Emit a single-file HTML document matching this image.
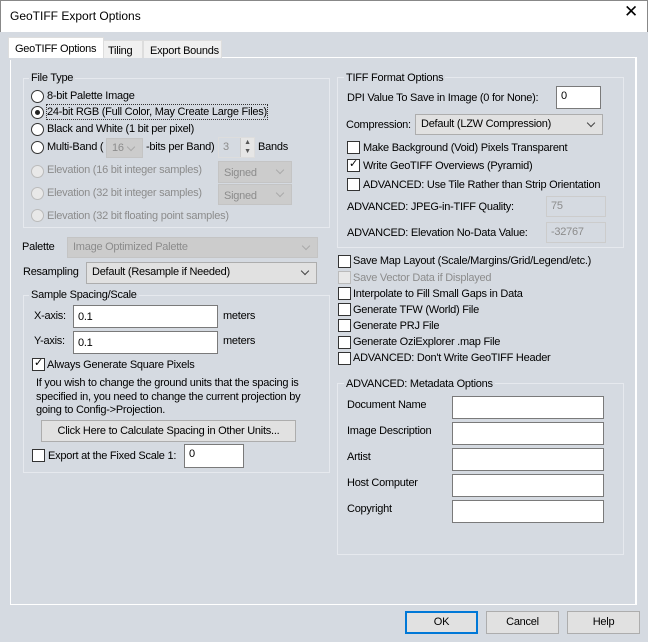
<!DOCTYPE html><html><head><style>
*{box-sizing:border-box;margin:0;padding:0}
body{width:648px;height:642px;background:#d5dae1;font:11px "Liberation Sans",sans-serif;letter-spacing:-0.25px;color:#000;position:relative;overflow:hidden}
.a{position:absolute;white-space:nowrap}
.title{left:0;top:0;width:648px;height:32px;background:#fff;border:1px solid #888;border-bottom:none}
.g{position:absolute;border:1px solid #e6e9ee}
.gl{position:absolute;background:#d5dae1;padding:0 2px;line-height:14px;white-space:nowrap}
.in{position:absolute;background:#fff;border:1px solid #7a7a7a;padding:2px 4px;line-height:14px;white-space:nowrap}
.dis{background:#d5dae1;border-color:#ccc;color:#8c8c8c}
.cb{position:absolute;width:13px;height:13px;background:#fff;border:1px solid #333}
.rb{position:absolute;width:13px;height:13px;background:#fff;border:1px solid #333;border-radius:50%}
.rb.d,.cb.d{border-color:#bbb;background:#e8e8e8}
.t{position:absolute;line-height:14px;white-space:nowrap}
.gr{color:#8c8c8c}
.combo{position:absolute;background:#e1e1e1;border:1px solid #adadad;padding:2px 5px;line-height:14px;white-space:nowrap}
.combo.d{background:#ccc;border-color:#c4c4c4;color:#8c8c8c}
.combo:after{content:"";position:absolute;right:8px;top:5px;width:5px;height:5px;border-right:1px solid #444;border-bottom:1px solid #444;transform:rotate(45deg)}
.combo.d:after{border-color:#aaa}
.btn{position:absolute;background:#e1e1e1;border:1px solid #adadad;text-align:center;line-height:20px;white-space:nowrap}
</style></head><body>
<div class="a title"></div>
<div class="t" style="left:10px;top:9px;font-size:12px;letter-spacing:0">GeoTIFF Export Options</div>
<div class="t" style="left:624px;top:5px;font-size:17px">✕</div>
<div class="a" style="left:10px;top:57px;width:627px;height:548px;border:1px solid #fff;border-right:2px solid #fff"></div>
<div class="a" style="left:103px;top:40px;width:40px;height:18px;border:1px solid #ddd;border-bottom:none;background:#f0f0f0"></div>
<div class="a" style="left:143px;top:40px;width:79px;height:18px;border:1px solid #ddd;border-bottom:none;background:#f0f0f0"></div>
<div class="a" style="left:8px;top:37px;width:96px;height:21px;background:#fff;border:1px solid #ddd;border-bottom:none"></div>
<div class="a" style="left:10px;top:58px;width:94px;height:2px;background:#d5dae1"></div>
<div class="t" style="left:15px;top:42px">GeoTIFF Options</div>
<div class="t" style="left:108px;top:44px">Tiling</div>
<div class="t" style="left:150px;top:44px">Export Bounds</div>
<!-- file type -->
<div class="g" style="left:23px;top:78px;width:307px;height:150px"></div>
<div class="gl" style="left:29px;top:71px">File Type</div>
<div class="rb" style="left:31px;top:90px"></div><div class="t" style="left:47px;top:89px">8-bit Palette Image</div>
<div class="rb" style="left:31px;top:106px"></div><div class="a" style="left:35px;top:110px;width:5px;height:5px;border-radius:50%;background:#222"></div>
<div class="t" style="left:47px;top:105px;outline:1px dotted #333">24-bit RGB (Full Color, May Create Large Files)</div>
<div class="rb" style="left:31px;top:123px"></div><div class="t" style="left:47px;top:122px">Black and White (1 bit per pixel)</div>
<div class="rb" style="left:31px;top:141px"></div><div class="t" style="left:47px;top:140px">Multi-Band (</div>
<div class="combo d" style="left:106px;top:138px;width:37px;height:20px">16</div>
<div class="t" style="left:146px;top:140px">-bits per Band)</div>
<div class="in dis" style="left:218px;top:137px;width:37px;height:21px;border-color:#ddd">3</div>
<div class="a" style="left:240px;top:138px;width:14px;height:19px;background:#e6e6e6;border-left:1px solid #ccc;font-size:7px;text-align:center;line-height:9px;color:#555">▲<br>▼</div>
<div class="t" style="left:258px;top:140px">Bands</div>
<div class="rb d" style="left:31px;top:165px"></div><div class="t gr" style="left:47px;top:163px">Elevation (16 bit integer samples)</div>
<div class="combo d" style="left:218px;top:161px;width:74px;height:22px;padding-top:4px">Signed</div>
<div class="rb d" style="left:31px;top:187px"></div><div class="t gr" style="left:47px;top:186px">Elevation (32 bit integer samples)</div>
<div class="combo d" style="left:218px;top:184px;width:74px;height:21px;padding-top:4px">Signed</div>
<div class="rb d" style="left:31px;top:209px"></div><div class="t gr" style="left:47px;top:209px">Elevation (32 bit floating point samples)</div>
<!-- palette -->
<div class="t" style="left:22px;top:240px">Palette</div>
<div class="combo d" style="left:67px;top:237px;width:251px;height:21px">Image Optimized Palette</div>
<div class="t" style="left:23px;top:265px">Resampling</div>
<div class="combo" style="left:86px;top:262px;width:231px;height:22px">Default (Resample if Needed)</div>
<!-- sample spacing -->
<div class="g" style="left:23px;top:295px;width:307px;height:178px"></div>
<div class="gl" style="left:29px;top:288px">Sample Spacing/Scale</div>
<div class="t" style="left:34px;top:309px">X-axis:</div>
<div class="in" style="left:73px;top:305px;width:145px;height:23px;padding-top:4px">0.1</div>
<div class="t" style="left:223px;top:309px">meters</div>
<div class="t" style="left:34px;top:334px">Y-axis:</div>
<div class="in" style="left:73px;top:331px;width:145px;height:23px;padding-top:4px">0.1</div>
<div class="t" style="left:223px;top:334px">meters</div>
<div class="cb" style="left:32px;top:358px"></div><div class="t" style="left:34px;top:356px;font-size:11px">✓</div>
<div class="t" style="left:47px;top:358px">Always Generate Square Pixels</div>
<div class="t" style="left:36px;top:377px;line-height:13.5px">If you wish to change the ground units that the spacing is<br>specified in, you need to change the current projection by<br>going to Config-&gt;Projection.</div>
<div class="btn" style="left:41px;top:420px;width:255px;height:22px">Click Here to Calculate Spacing in Other Units...</div>
<div class="cb" style="left:32px;top:449px"></div>
<div class="t" style="left:48px;top:449px">Export at the Fixed Scale 1:</div>
<div class="in" style="left:184px;top:444px;width:60px;height:24px">0</div>
<!-- TIFF format -->
<div class="g" style="left:337px;top:77px;width:287px;height:171px"></div>
<div class="gl" style="left:344px;top:71px">TIFF Format Options</div>
<div class="t" style="left:347px;top:91px">DPI Value To Save in Image (0 for None):</div>
<div class="in" style="left:556px;top:86px;width:45px;height:23px">0</div>
<div class="t" style="left:346px;top:118px">Compression:</div>
<div class="combo" style="left:415px;top:114px;width:188px;height:21px">Default (LZW Compression)</div>
<div class="cb" style="left:347px;top:141px"></div><div class="t" style="left:363px;top:141px">Make Background (Void) Pixels Transparent</div>
<div class="cb" style="left:347px;top:159px"></div><div class="t" style="left:349px;top:157px;font-size:11px">✓</div><div class="t" style="left:363px;top:159px">Write GeoTIFF Overviews (Pyramid)</div>
<div class="cb" style="left:347px;top:178px"></div><div class="t" style="left:363px;top:178px">ADVANCED: Use Tile Rather than Strip Orientation</div>
<div class="t" style="left:347px;top:200px">ADVANCED: JPEG-in-TIFF Quality:</div>
<div class="in dis" style="left:546px;top:196px;width:60px;height:21px">75</div>
<div class="t" style="left:347px;top:226px">ADVANCED: Elevation No-Data Value:</div>
<div class="in dis" style="left:546px;top:222px;width:60px;height:21px">-32767</div>
<!-- checkbox list -->
<div class="cb" style="left:338px;top:255px"></div><div class="t" style="left:353px;top:254px">Save Map Layout (Scale/Margins/Grid/Legend/etc.)</div>
<div class="cb d" style="left:338px;top:271px"></div><div class="t gr" style="left:353px;top:271px">Save Vector Data if Displayed</div>
<div class="cb" style="left:338px;top:287px"></div><div class="t" style="left:353px;top:287px">Interpolate to Fill Small Gaps in Data</div>
<div class="cb" style="left:338px;top:303px"></div><div class="t" style="left:353px;top:303px">Generate TFW (World) File</div>
<div class="cb" style="left:338px;top:319px"></div><div class="t" style="left:353px;top:319px">Generate PRJ File</div>
<div class="cb" style="left:338px;top:336px"></div><div class="t" style="left:353px;top:335px">Generate OziExplorer .map File</div>
<div class="cb" style="left:338px;top:352px"></div><div class="t" style="left:353px;top:351px">ADVANCED: Don't Write GeoTIFF Header</div>
<!-- metadata -->
<div class="g" style="left:337px;top:383px;width:287px;height:172px"></div>
<div class="gl" style="left:344px;top:377px">ADVANCED: Metadata Options</div>
<div class="t" style="left:347px;top:398px">Document Name</div><div class="in" style="left:452px;top:396px;width:152px;height:23px"></div>
<div class="t" style="left:347px;top:424px">Image Description</div><div class="in" style="left:452px;top:422px;width:152px;height:23px"></div>
<div class="t" style="left:347px;top:450px">Artist</div><div class="in" style="left:452px;top:448px;width:152px;height:23px"></div>
<div class="t" style="left:347px;top:476px">Host Computer</div><div class="in" style="left:452px;top:474px;width:152px;height:23px"></div>
<div class="t" style="left:347px;top:502px">Copyright</div><div class="in" style="left:452px;top:500px;width:152px;height:23px"></div>
<!-- footer -->
<div class="btn" style="left:405px;top:611px;width:73px;height:23px;border:2px solid #0078d7;line-height:19px">OK</div>
<div class="btn" style="left:486px;top:611px;width:73px;height:23px">Cancel</div>
<div class="btn" style="left:567px;top:611px;width:73px;height:23px">Help</div>
</body></html>
